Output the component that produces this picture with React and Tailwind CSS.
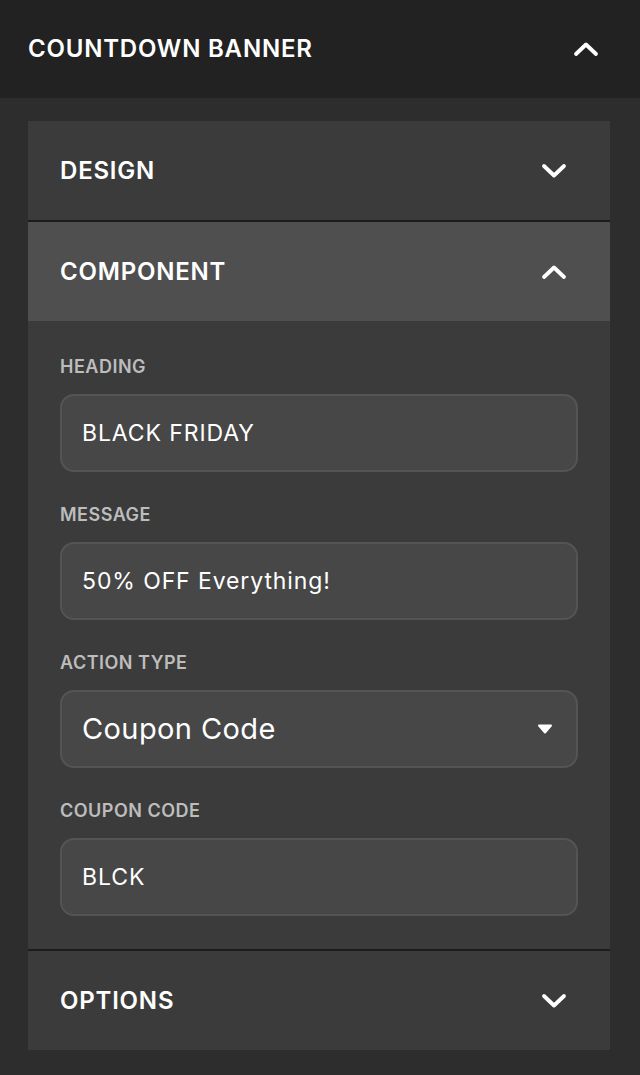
import React from 'react';

const font = { fontFamily: 'Inter, "Noto Sans", sans-serif' };

const Chevron = ({ up }) => (
  <svg width="26" height="16" viewBox="0 0 26 16" fill="none" className="shrink-0">
    <polyline
      points={up ? '3,13 13,3.5 23,13' : '3,3 13,12.5 23,3'}
      stroke="white"
      strokeWidth="3.8"
      strokeLinecap="round"
      strokeLinejoin="round"
    />
  </svg>
);

const Caret = () => (
  <svg width="16" height="10" viewBox="0 0 16 10" className="shrink-0">
    <path d="M2 1.5 H14 L8 8.5 Z" fill="white" stroke="white" strokeWidth="2" strokeLinejoin="round" />
  </svg>
);

const SectionHeader = ({ title, open, active }) => (
  <div className={`flex items-center justify-between h-[99px] pl-8 pr-[43px] ${active ? 'bg-[#4f4f4f]' : 'bg-[#3b3b3b]'}`}>
    <span className="text-[24px] font-semibold text-white tracking-[0.8px]">{title}</span>
    <Chevron up={open} />
  </div>
);

const Field = ({ label, value, select }) => (
  <div className="flex flex-col">
    <label className="text-[18px] font-semibold text-[#bdbdbd] mb-[16px] leading-[22px] tracking-[0.5px]">{label}</label>
    <div className="flex items-center justify-between h-[78px] rounded-[14px] bg-[#474747] border-2 border-[#545454] pl-[20px] pr-[23px]">
      <span className={`${select ? 'text-[29px] tracking-[0.4px]' : 'text-[23px] tracking-[0.9px]'} text-white font-normal`}>{value}</span>
      {select && <Caret />}
    </div>
  </div>
);

export default function App() {
  return (
    <div style={font} className="w-[640px] min-h-[1075px] bg-[#2d2d2d]">
      <div className="flex items-center justify-between h-[98px] bg-[#222222] pl-7 pr-[41px]">
        <span className="text-[24px] font-semibold text-white tracking-[0.8px]">COUNTDOWN BANNER</span>
        <Chevron up />
      </div>
      <div className="pl-7 pr-[30px] pt-[23px] pb-[25px]">
        <div className="flex flex-col gap-[2px] bg-[#1c1c1c]">
          <SectionHeader title="DESIGN" />
          <div>
            <SectionHeader title="COMPONENT" open active />
            <div className="bg-[#3b3b3b] px-8 pt-[35px] pb-[33px] flex flex-col gap-[32px]">
              <Field label="HEADING" value="BLACK FRIDAY" />
              <Field label="MESSAGE" value="50% OFF Everything!" />
              <Field label="ACTION TYPE" value="Coupon Code" select />
              <Field label="COUPON CODE" value="BLCK" />
            </div>
          </div>
          <SectionHeader title="OPTIONS" />
        </div>
      </div>
    </div>
  );
}
